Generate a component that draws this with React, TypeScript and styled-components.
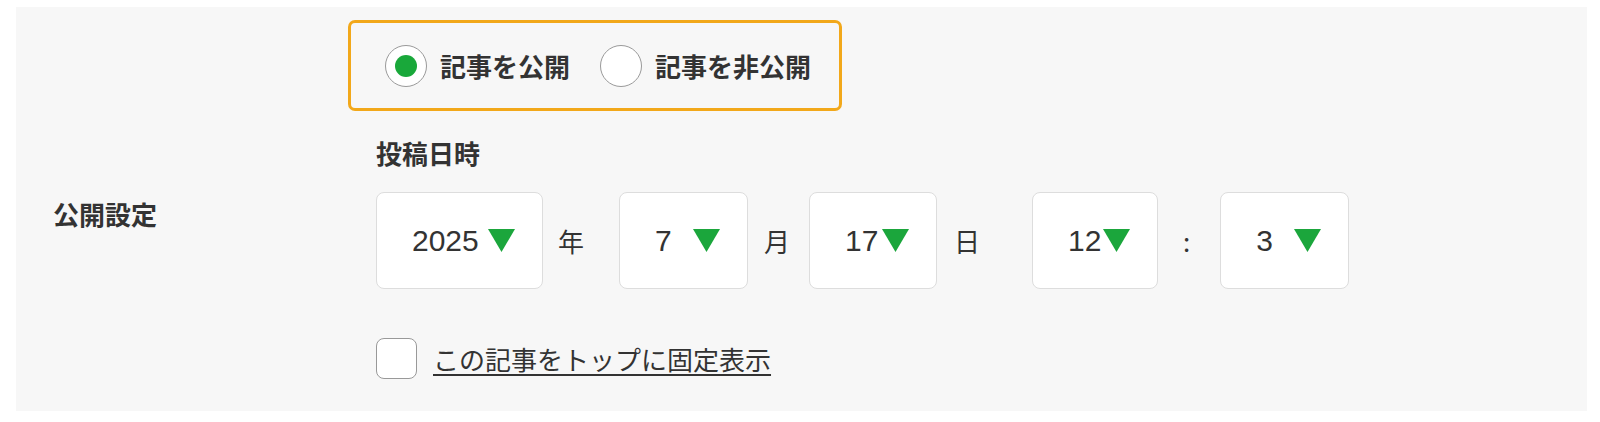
import { Fragment } from "react";
import styled, { createGlobalStyle } from "styled-components";

const GlobalStyle = createGlobalStyle`
  body {
    margin: 0;
    background: #ffffff;
    font-family: "Liberation Sans", "Noto Sans CJK JP", sans-serif;
    color: #333333;
  }
`;

const Panel = styled.section`
  display: flex;
  box-sizing: border-box;
  width: 1571px;
  height: 404px;
  margin: 7px 0 0 16px;
  background: #f7f7f7;
`;

const LabelCol = styled.div`
  flex-shrink: 0;
  box-sizing: border-box;
  width: 332px;
  padding: 9px 0 0 37px;
  display: flex;
  align-items: center;
  font-family: "Noto Sans CJK JP", sans-serif;
  font-size: 26px;
  font-weight: 700;
  line-height: 26px;
`;

const ContentCol = styled.div`
  display: flex;
  flex-direction: column;
  align-items: flex-start;
  padding-top: 13px;
`;

const RadioGroup = styled.div`
  display: inline-flex;
  align-items: center;
  box-sizing: border-box;
  height: 91px;
  padding: 0 28px 0 34px;
  border: 3px solid #f2a81a;
  border-radius: 7px;
`;

const RadioLabel = styled.label<{ $mr?: number }>`
  display: flex;
  align-items: center;
  gap: 13px;
  margin-right: ${(p) => p.$mr ?? 0}px;
  font-family: "Noto Sans CJK JP", sans-serif;
  font-size: 26px;
  font-weight: 700;
  line-height: 26px;
  color: #333333;
`;

const RadioCircle = styled.span<{ $checked?: boolean }>`
  display: flex;
  align-items: center;
  justify-content: center;
  box-sizing: border-box;
  width: 42px;
  height: 42px;
  border: 1.5px solid #9a9a9a;
  border-radius: 50%;
  background: #ffffff;

  &::after {
    content: "";
    display: ${(p) => (p.$checked ? "block" : "none")};
    width: 22px;
    height: 22px;
    border-radius: 50%;
    background: #19a83a;
  }
`;

const DateSection = styled.div`
  margin-left: 28px;
  display: flex;
  flex-direction: column;
  align-items: flex-start;
`;

const Heading = styled.h3`
  margin: 29px 0 0;
  font-family: "Noto Sans CJK JP", sans-serif;
  font-size: 26px;
  font-weight: 700;
  line-height: 26px;
`;

const DateRow = styled.div`
  display: flex;
  align-items: center;
  margin-top: 26px;
`;

const Select = styled.div<{ $w: number }>`
  display: flex;
  align-items: center;
  justify-content: space-between;
  box-sizing: border-box;
  width: ${(p) => p.$w}px;
  height: 97px;
  padding: 0 27px 0 35px;
  background: #ffffff;
  border: 1.5px solid #dddddd;
  border-radius: 8px;
  font-size: 30px;
  color: #333333;
`;

const Unit = styled.span<{ $ml: number; $mr: number }>`
  margin: 0 ${(p) => p.$mr}px 0 ${(p) => p.$ml}px;
  font-family: "Noto Sans CJK JP", sans-serif;
  font-size: 26px;
  line-height: 26px;
  color: #333333;
`;

const CheckRow = styled.label`
  display: flex;
  align-items: center;
  gap: 16px;
  margin-top: 49px;
`;

const CheckBox = styled.span`
  box-sizing: border-box;
  width: 41px;
  height: 41px;
  border: 1.5px solid #999999;
  border-radius: 8px;
  background: #ffffff;
`;

const CheckText = styled.span`
  font-family: "Noto Sans CJK JP", sans-serif;
  font-size: 26px;
  line-height: 26px;
  text-decoration: underline;
  text-underline-offset: 4px;
  text-decoration-thickness: 1.5px;
  color: #333333;
`;

const Arrow = () => (
  <svg width="27" height="23" viewBox="0 0 27 23">
    <polygon points="0,0 27,0 13.5,23" fill="#1ba63c" />
  </svg>
);

const fields = [
  { id: "year", value: "2025", w: 167, unit: "年", ml: 15, mr: 35 },
  { id: "month", value: "7", w: 129, unit: "月", ml: 16, mr: 19 },
  { id: "day", value: "17", w: 128, unit: "日", ml: 17, mr: 52 },
  { id: "hour", value: "12", w: 126, unit: ":", ml: 25, mr: 30 },
  { id: "minute", value: "3", w: 129, unit: "", ml: 0, mr: 0 },
];

export default function App() {
  return (
    <>
      <GlobalStyle />
      <Panel>
        <LabelCol>公開設定</LabelCol>
        <ContentCol>
          <RadioGroup>
            <RadioLabel $mr={30}>
              <RadioCircle $checked />
              記事を公開
            </RadioLabel>
            <RadioLabel>
              <RadioCircle />
              記事を非公開
            </RadioLabel>
          </RadioGroup>
          <DateSection>
            <Heading>投稿日時</Heading>
            <DateRow>
              {fields.map((f) => (
                <Fragment key={f.id}>
                  <Select $w={f.w}>
                    <span>{f.value}</span>
                    <Arrow />
                  </Select>
                  {f.unit && (
                    <Unit $ml={f.ml} $mr={f.mr}>
                      {f.unit}
                    </Unit>
                  )}
                </Fragment>
              ))}
            </DateRow>
            <CheckRow>
              <CheckBox />
              <CheckText>この記事をトップに固定表示</CheckText>
            </CheckRow>
          </DateSection>
        </ContentCol>
      </Panel>
    </>
  );
}
